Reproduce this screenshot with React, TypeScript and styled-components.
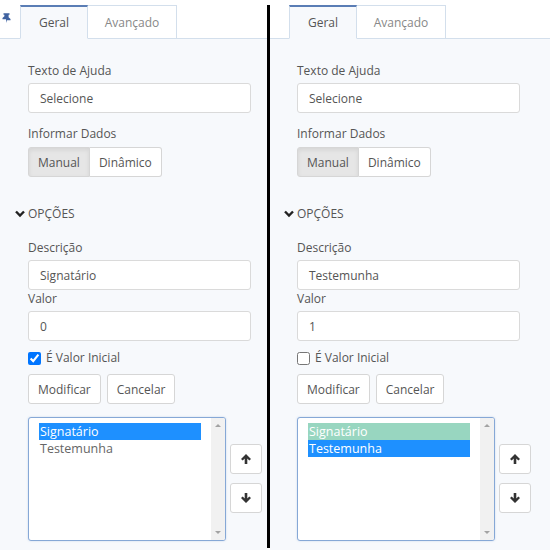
import React from "react";
import styled, { createGlobalStyle } from "styled-components";

const Global = createGlobalStyle`
  html, body { margin: 0; padding: 0; background: #ffffff; }
  body { font-family: "Open Sans", "Liberation Sans", sans-serif; font-size: 12px; color: #555; }
  * { box-sizing: border-box; }
`;

const Page = styled.div`
  display: flex;
  width: 550px;
  height: 560px;
  align-items: flex-start;
`;

const Divider = styled.div`
  width: 3px;
  flex: 0 0 3px;
  margin-top: 5px;
  height: 543px;
  background: #000;
`;

const PanelBox = styled.div<{ $w?: number }>`
  ${(p) => (p.$w ? `width: ${p.$w}px; flex: 0 0 ${p.$w}px;` : `flex: 1;`)}
  height: 550px;
  display: flex;
  flex-direction: column;
  background: #f7f9fc;
`;

const TabBar = styled.div`
  height: 39px;
  flex: 0 0 39px;
  display: flex;
  align-items: flex-end;
  background: #ffffff;
  border-bottom: 1px solid #d3dfec;
`;

const PinSlot = styled.div<{ $w: number }>`
  width: ${(p) => p.$w}px;
  align-self: stretch;
  display: flex;
  align-items: flex-start;
  padding: 13px 0 0 2px;
`;

const Tab = styled.div<{ $active?: boolean }>`
  height: 34px;
  margin-bottom: -1px;
  display: flex;
  align-items: center;
  justify-content: center;
  width: ${(p) => (p.$active ? 68 : 89)}px;
  font-size: 12px;
  color: ${(p) => (p.$active ? "#555" : "#888")};
  background: ${(p) => (p.$active ? "#f7f9fc" : "#ffffff")};
  border: 1px solid #d3dfec;
  border-top: ${(p) => (p.$active ? "2px solid #5a7db5" : "1px solid #d3dfec")};
  border-bottom: ${(p) => (p.$active ? "1px solid #f7f9fc" : "1px solid #d3dfec")};
  & + & { border-left: none; }
`;

const Body = styled.div<{ $left: number }>`
  padding: 23px 0 0 ${(p) => p.$left}px;
  display: flex;
  flex-direction: column;
  align-items: flex-start;
`;

const Label = styled.div<{ $mt?: number }>`
  line-height: 18px;
  font-size: 12px;
  color: #555;
  margin-top: ${(p) => p.$mt ?? 0}px;
`;

const Input = styled.div<{ $mt?: number }>`
  width: 223px;
  height: 30px;
  margin-top: ${(p) => p.$mt ?? 3}px;
  border: 1px solid #dadada;
  border-radius: 3px;
  background: #fff;
  display: flex;
  align-items: center;
  padding-left: 11px;
  font-size: 12px;
  color: #555;
`;

const Group = styled.div`
  display: flex;
  margin-top: 4px;
`;

const GroupBtn = styled.div<{ $active?: boolean; $first?: boolean }>`
  height: 30px;
  display: flex;
  align-items: center;
  padding: 0 9px;
  font-size: 12px;
  color: #555;
  background: ${(p) => (p.$active ? "#e6e6e6" : "#fff")};
  box-shadow: ${(p) => (p.$active ? "inset 0 2px 4px rgba(0,0,0,0.08)" : "none")};
  border: 1px solid #d6d6d6;
  border-radius: ${(p) => (p.$first ? "3px 0 0 3px" : "0 3px 3px 0")};
  ${(p) => (!p.$first ? "border-left: none;" : "")}
`;

const Section = styled.div`
  margin: 28px 0 0 -13px;
  display: flex;
  align-items: center;
  gap: 3px;
  line-height: 18px;
  font-size: 12px;
  color: #555;
`;

const CheckRow = styled.label`
  margin-top: 8px;
  display: flex;
  align-items: center;
  line-height: 18px;
  font-size: 12px;
  color: #555;
  input {
    margin: 0 5px 0 0;
    width: 13px;
    height: 13px;
  }
`;

const Buttons = styled.div`
  display: flex;
  gap: 6px;
  margin-top: 7px;
`;

const Button = styled.div`
  height: 30px;
  display: flex;
  align-items: center;
  justify-content: center;
  padding: 0 9px;
  border: 1px solid #d6d6d6;
  border-radius: 3px;
  background: #fff;
  font-size: 12px;
  color: #555;
`;

const ListArea = styled.div`
  display: flex;
  gap: 4px;
  margin-top: 13px;
`;

const ListBox = styled.div`
  width: 198px;
  height: 124px;
  border: 1px solid #86a8d6;
  border-radius: 3px;
  background: #fff;
  display: flex;
  box-shadow: 0 0 2px rgba(100, 140, 200, 0.35);
  overflow: hidden;
`;

const Items = styled.div`
  flex: 1;
  padding: 5px 10px 0 10px;
  display: flex;
  flex-direction: column;
`;

const Item = styled.div<{ $bg?: string }>`
  height: 17px;
  line-height: 17px;
  font-size: 12.5px;
  padding-left: 1px;
  color: ${(p) => (p.$bg ? "#fff" : "#666")};
  background: ${(p) => p.$bg ?? "transparent"};
`;

const Scroll = styled.div`
  width: 14px;
  background: #f1f1f1;
  display: flex;
  flex-direction: column;
  justify-content: space-between;
  align-items: center;
  padding: 6px 0 6px 0;
`;

const Tri = styled.div<{ $up?: boolean }>`
  width: 0;
  height: 0;
  border-left: 3px solid transparent;
  border-right: 3px solid transparent;
  ${(p) => (p.$up ? "border-bottom: 3px solid #a3a3a3;" : "border-top: 3px solid #a3a3a3;")}
`;

const SideCol = styled.div`
  display: flex;
  flex-direction: column;
  gap: 9px;
  margin-top: 27px;
`;

const IconBtn = styled.div`
  width: 32px;
  height: 30px;
  border: 1px solid #d6d6d6;
  border-radius: 3px;
  background: #fff;
  display: flex;
  align-items: center;
  justify-content: center;
`;

const Pin = () => (
  <svg width="9" height="10" viewBox="0 0 9 10">
    <path d="M1.5 0.3h6v1.4h-0.9v2.6l1.9 1.8v1.1H5L4.5 10 4 6.2H0.5V5.1l1.9-1.8V1.7H1.5z" fill="#3f62a0" />
  </svg>
);

const Chevron = () => (
  <svg width="10" height="8" viewBox="0 0 10 8">
    <path d="M1 1.5l4 4 4-4" fill="none" stroke="#222" strokeWidth="2.4" />
  </svg>
);

const Arrow = ({ down }: { down?: boolean }) => (
  <svg width="10" height="10" viewBox="0 0 10 10" style={down ? { transform: "rotate(180deg)" } : undefined}>
    <path d="M5 0L10 5 8.3 6.6 6.3 4.6V10H3.7V4.6L1.7 6.6 0 5z" fill="#333" />
  </svg>
);

type PanelProps = {
  width?: number;
  pinW: number;
  pin?: boolean;
  left: number;
  desc: string;
  valor: string;
  checked: boolean;
  items: { text: string; bg?: string }[];
};

const Panel = ({ width, pinW, pin, left, desc, valor, checked, items }: PanelProps) => (
  <PanelBox $w={width}>
    <TabBar>
      <PinSlot $w={pinW}>{pin && <Pin />}</PinSlot>
      <Tab $active>Geral</Tab>
      <Tab>Avançado</Tab>
    </TabBar>
    <Body $left={left}>
      <Label>Texto de Ajuda</Label>
      <Input>Selecione</Input>
      <Label $mt={12}>Informar Dados</Label>
      <Group>
        <GroupBtn $active $first>Manual</GroupBtn>
        <GroupBtn>Dinâmico</GroupBtn>
      </Group>
      <Section>
        <Chevron />
        OPÇÕES
      </Section>
      <Label $mt={16}>Descrição</Label>
      <Input $mt={3}>{desc}</Input>
      <Label>Valor</Label>
      <Input $mt={3}>{valor}</Input>
      <CheckRow>
        <input type="checkbox" defaultChecked={checked} />
        É Valor Inicial
      </CheckRow>
      <Buttons>
        <Button>Modificar</Button>
        <Button>Cancelar</Button>
      </Buttons>
      <ListArea>
        <ListBox>
          <Items>
            {items.map((it) => (
              <Item key={it.text} $bg={it.bg}>
                {it.text}
              </Item>
            ))}
          </Items>
          <Scroll>
            <Tri $up />
            <Tri />
          </Scroll>
        </ListBox>
        <SideCol>
          <IconBtn>
            <Arrow />
          </IconBtn>
          <IconBtn>
            <Arrow down />
          </IconBtn>
        </SideCol>
      </ListArea>
    </Body>
  </PanelBox>
);

export default function App() {
  return (
    <>
      <Global />
      <Page>
        <Panel
          width={267}
          pinW={20}
          pin
          left={28}
          desc="Signatário"
          valor="0"
          checked
          items={[{ text: "Signatário", bg: "#1e90ff" }, { text: "Testemunha" }]}
        />
        <Divider />
        <Panel
          pinW={19}
          left={27}
          desc="Testemunha"
          valor="1"
          checked={false}
          items={[
            { text: "Signatário", bg: "#98d6c0" },
            { text: "Testemunha", bg: "#1e90ff" },
          ]}
        />
      </Page>
    </>
  );
}
